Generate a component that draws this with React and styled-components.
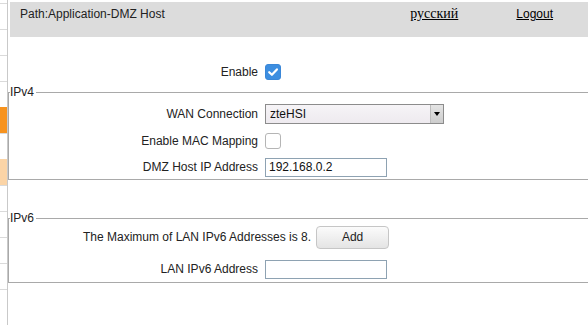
import React from "react";
import styled, { createGlobalStyle } from "styled-components";

const GlobalStyle = createGlobalStyle`
  html, body {
    margin: 0;
    padding: 0;
    overflow: hidden;
    background: #fff;
  }
  body {
    font-family: "Liberation Sans", Arial, sans-serif;
    font-size: 12px;
    color: #222;
  }
`;

const menuItems = [
  "plain",
  "plain",
  "plain",
  "plain",
  "active",
  "plain",
  "hover",
  "plain",
  "plain",
  "plain",
  "plain",
  "plain",
];

function Checkbox({ checked }) {
  return (
    <CheckBox $checked={checked} role="checkbox" aria-checked={checked}>
      {checked && (
        <svg width="12" height="12" viewBox="0 0 12 12">
          <path
            d="M2.2 6.2 L4.9 8.8 L9.9 3.4"
            fill="none"
            stroke="#fff"
            strokeWidth="2.2"
            strokeLinecap="round"
            strokeLinejoin="round"
          />
        </svg>
      )}
    </CheckBox>
  );
}

export default function App() {
  return (
    <>
      <GlobalStyle />
      <Page>
        <SideMenu>
          {menuItems.map((kind, i) => (
            <MenuItem key={i} $kind={kind} />
          ))}
        </SideMenu>
        <Main>
          <Header>
            <PathText>Path:Application-DMZ Host</PathText>
            <Links>
              <LangLink href="#">русский</LangLink>
              <HeaderLink href="#">Logout</HeaderLink>
            </Links>
          </Header>

          <EnableRow $labelWidth={250}>
            <Label>Enable</Label>
            <Checkbox checked />
          </EnableRow>

          <Group $top={1}>
            <Legend>IPv4</Legend>
            <Row $labelWidth={249}>
              <Label>WAN Connection</Label>
              <SelectWrap>
                <Select defaultValue="zteHSI">
                  <option>zteHSI</option>
                </Select>
                <SelectArrow />
              </SelectWrap>
            </Row>
            <Row $labelWidth={249}>
              <Label>Enable MAC Mapping</Label>
              <Checkbox checked={false} />
            </Row>
            <Row $labelWidth={249} $height={24}>
              <Label>DMZ Host IP Address</Label>
              <TextInput defaultValue="192.168.0.2" />
            </Row>
          </Group>

          <Group $top={31}>
            <Legend>IPv6</Legend>
            <NoticeRow>
              <span>The Maximum of LAN IPv6 Addresses is 8.</span>
              <Button type="button">Add</Button>
            </NoticeRow>
            <Row $labelWidth={249} $gap={8}>
              <Label>LAN IPv6 Address</Label>
              <TextInput defaultValue="" />
            </Row>
          </Group>
        </Main>
      </Page>
    </>
  );
}

const Page = styled.div`
  display: flex;
  min-height: 100vh;
`;

const SideMenu = styled.div`
  width: 7px;
  flex-shrink: 0;
  padding-top: 3px;
  border-right: 1px solid #c9c9c9;
`;

const MenuItem = styled.div`
  height: 25px;
  border-top: 1px solid
    ${(p) => (p.$kind === "plain" ? "#dadada" : "transparent")};
  background: ${(p) =>
    p.$kind === "active" ? "#f7931e" : p.$kind === "hover" ? "#fbd4a6" : "#fff"};
`;

const Main = styled.div`
  flex: 1;
  min-width: 0;
`;

const Header = styled.div`
  display: flex;
  align-items: baseline;
  height: 35px;
  margin: 2px 0 0 2px;
  padding: 4px 35px 0 10px;
  box-sizing: border-box;
  background: #dcdcdc;
`;

const PathText = styled.span`
  flex: 1;
  line-height: 16px;
`;

const Links = styled.div`
  display: flex;
  align-items: baseline;
  gap: 58px;
`;

const HeaderLink = styled.a`
  color: #000;
  text-decoration: underline;
  line-height: 16px;
`;

const LangLink = styled(HeaderLink)`
  font-family: "Liberation Serif", "Times New Roman", serif;
  font-size: 14px;
`;

const Row = styled.div`
  display: grid;
  grid-template-columns: ${(p) => p.$labelWidth}px 1fr;
  column-gap: 7px;
  align-items: center;
  height: ${(p) => p.$height || 26}px;
  margin-top: ${(p) => (p.$gap === undefined ? 1 : p.$gap)}px;
`;

const EnableRow = styled(Row)`
  height: 25px;
  margin-top: 22px;
`;

const Label = styled.span`
  text-align: right;
  white-space: nowrap;
`;

const Group = styled.fieldset`
  margin: ${(p) => p.$top}px -4px 0 0;
  padding: 1px 0 0 0;
  border: 1px solid #a9a9a9;
  min-width: 0;
`;

const Legend = styled.legend`
  margin-left: 1px;
  padding: 0 2px 0 0;
  font-size: 12px;
  line-height: 14px;
  color: #222;
`;

const CheckBox = styled.span`
  display: inline-flex;
  align-items: center;
  justify-content: center;
  width: 16px;
  height: 16px;
  box-sizing: border-box;
  border-radius: 3px;
  border: 1px solid ${(p) => (p.$checked ? "#3a87d8" : "#b5b5b5")};
  background: ${(p) => (p.$checked ? "#3d8ee0" : "#fff")};
`;

const SelectWrap = styled.div`
  position: relative;
  width: 179px;
  height: 20px;
`;

const Select = styled.select`
  appearance: none;
  width: 100%;
  height: 100%;
  box-sizing: border-box;
  margin: 0;
  padding: 0 16px 0 4px;
  border: 1px solid #8c8c8c;
  border-radius: 0;
  background: linear-gradient(#f6f4f7, #eeeaef);
  font-family: "Liberation Sans", Arial, sans-serif;
  font-size: 12px;
  color: #111;
  outline: none;
`;

const SelectArrow = styled.span`
  position: absolute;
  top: 1px;
  right: 1px;
  bottom: 1px;
  width: 12px;
  background: linear-gradient(#e4e4e4, #cdcdcd);
  border-left: 1px solid #bcbcbc;
  &::after {
    content: "";
    position: absolute;
    left: 3px;
    top: 7px;
    border-left: 3px solid transparent;
    border-right: 3px solid transparent;
    border-top: 4px solid #000;
  }
`;

const TextInput = styled.input`
  width: 122px;
  height: 19px;
  box-sizing: border-box;
  margin: 0;
  padding: 0 3px;
  border: 1px solid #8ea2b2;
  border-radius: 0;
  font-family: "Liberation Sans", Arial, sans-serif;
  font-size: 12px;
  color: #111;
  outline: none;
`;

const NoticeRow = styled.div`
  display: flex;
  align-items: center;
  gap: 5px;
  height: 22px;
  padding-left: 74px;
`;

const Button = styled.button`
  width: 73px;
  height: 23px;
  margin: 0;
  border: 1px solid #c6c6c6;
  border-radius: 4px;
  background: linear-gradient(#fbfbfb, #e4e4e4);
  font-family: "Liberation Sans", Arial, sans-serif;
  font-size: 12px;
  color: #222;
  cursor: pointer;
`;
